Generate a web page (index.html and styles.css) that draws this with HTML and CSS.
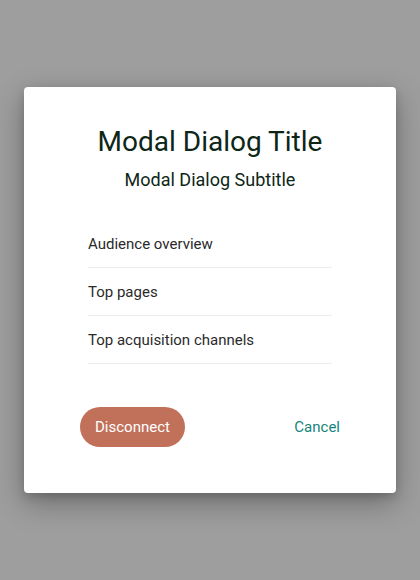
FILE: index.html
```html
<!DOCTYPE html>
<html>
<head>
<meta charset="utf-8">
<link rel="stylesheet" href="styles.css">
</head>
<body>
<div class="backdrop">
  <div class="dialog">
    <h1 class="title">Modal Dialog Title</h1>
    <h2 class="subtitle">Modal Dialog Subtitle</h2>
    <ul class="list">
      <li>Audience overview</li>
      <li>Top pages</li>
      <li>Top acquisition channels</li>
    </ul>
    <div class="footer">
      <button class="btn-primary">Disconnect</button>
      <button class="btn-link">Cancel</button>
    </div>
  </div>
</div>
</body>
</html>
```
FILE: styles.css
```css
html, body {
  margin: 0;
  padding: 0;
  height: 100%;
}
body {
  background: #9e9e9e;
  font-family: Roboto, "Noto Sans", sans-serif;
}
.backdrop {
  padding: 87px 24px 0;
}
.dialog {
  background: #fff;
  border-radius: 4px;
  box-shadow: 0 10px 30px rgba(0,0,0,0.3), 0 4px 10px rgba(0,0,0,0.15);
  padding: 37px 56px 46px;
  box-sizing: border-box;
  height: 406px;
}
.title {
  margin: 0;
  text-align: center;
  font-weight: 400;
  font-size: 28px;
  line-height: 36px;
  color: #0d2616;
}
.subtitle {
  margin: 8px 0 0;
  text-align: center;
  font-weight: 400;
  font-size: 18px;
  line-height: 24px;
  color: #0d2616;
}
.list {
  list-style: none;
  margin: 28px 8px 0;
  padding: 0;
}
.list li {
  height: 48px;
  line-height: 48px;
  font-size: 15px;
  color: #2a2a2a;
  border-bottom: 1px solid #ececec;
  box-sizing: border-box;
}
.footer {
  display: flex;
  justify-content: space-between;
  align-items: center;
  margin-top: 43px;
}
.btn-primary {
  background: #c1705a;
  color: #fff;
  border: none;
  border-radius: 20px;
  height: 40px;
  padding: 0 15px;
  font-family: inherit;
  font-size: 15px;
}
.btn-link {
  background: none;
  border: none;
  color: #14857d;
  font-family: inherit;
  font-size: 15px;
  padding: 0;
}
```
